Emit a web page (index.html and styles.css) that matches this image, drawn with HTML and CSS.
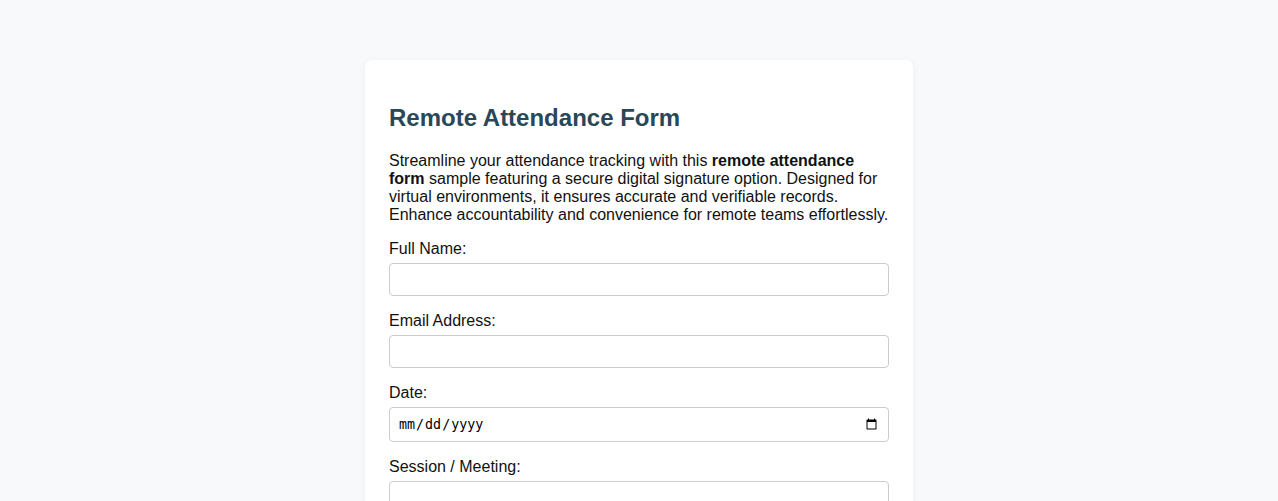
FILE: index.html
```html
<!DOCTYPE html>
<html lang="en">
<head>
<meta charset="utf-8">
<title>Remote Attendance Form</title>
<link rel="stylesheet" href="styles.css">
</head>
<body>
<div class="card">
  <h2 class="title">Remote Attendance Form</h2>
  <p class="intro">Streamline your attendance tracking with this <strong>remote attendance form</strong> sample featuring a secure digital signature option. Designed for virtual environments, it ensures accurate and verifiable records. Enhance accountability and convenience for remote teams effortlessly.</p>
  <form>
    <div class="group">
      <label for="name">Full Name:</label>
      <input type="text" id="name">
    </div>
    <div class="group">
      <label for="email">Email Address:</label>
      <input type="email" id="email">
    </div>
    <div class="group">
      <label for="date">Date:</label>
      <input type="date" id="date">
    </div>
    <div class="group">
      <label for="session">Session / Meeting:</label>
      <input type="text" id="session">
    </div>
  </form>
</div>
</body>
</html>
```
FILE: styles.css
```css
body {
  margin: 0;
  padding: 60px 20px 40px;
  background: #f8f9fa;
  font-family: "Liberation Sans", Arial, sans-serif;
  color: #111;
}
.card {
  width: 500px;
  margin: 0 auto;
  background: #fff;
  padding: 24px;
  border-radius: 8px;
  box-shadow: 0 2px 8px rgba(0, 0, 0, 0.05);
}
.title {
  font-size: 24px;
  color: #284858;
  margin: 20px 0;
}
.intro {
  font-size: 16px;
  margin: 0 0 16px;
}
.group {
  margin-bottom: 16px;
}
.group label {
  display: block;
  font-size: 16px;
  margin-bottom: 5px;
}
.group input {
  display: block;
  width: 100%;
  box-sizing: border-box;
  padding: 8px;
  border: 1px solid #ccc;
  border-radius: 4px;
  background: #fff;
}
```
